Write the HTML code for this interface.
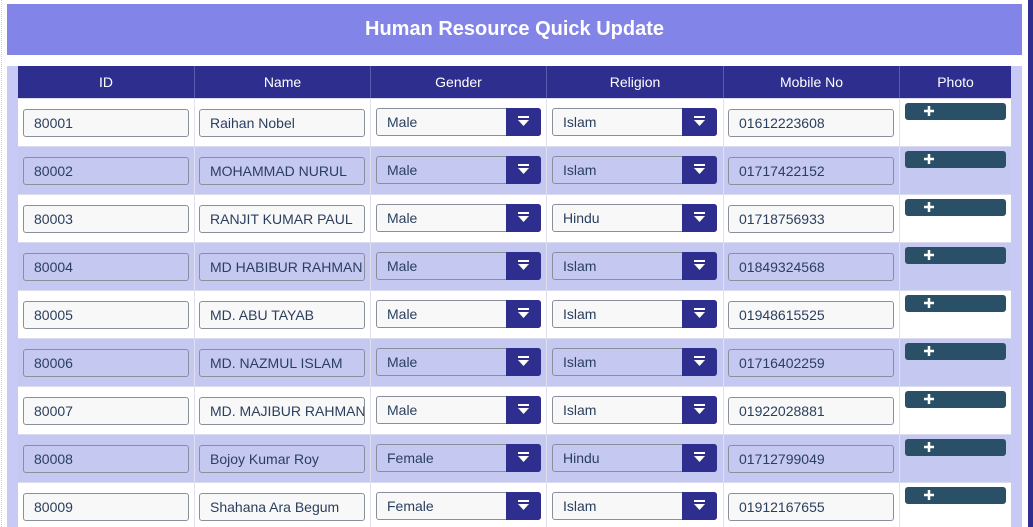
<!DOCTYPE html>
<html><head><meta charset="utf-8"><style>
*{box-sizing:border-box;margin:0;padding:0}
html,body{width:1033px;height:527px;overflow:hidden}
body{background:#fff;font-family:"Liberation Sans",sans-serif;position:relative}
.rbar{position:absolute;left:1028px;top:0;width:5px;height:527px;background:#2e2e8f}
.lline{position:absolute;left:1px;top:0;width:1px;height:527px;border-left:1px dotted #ccc}
.title{position:absolute;left:7px;top:4px;width:1015px;height:51px;background:#8284e8;color:#fff;font-weight:bold;font-size:20px;text-align:center;line-height:51px}
.wrap{position:absolute;left:7px;top:66px;width:1015px;height:470px;background:#c8c9f4}
.hdr{position:absolute;left:11px;top:0;width:993px;height:32px;background:#2e2e8f}
.hdr div{position:absolute;top:0;height:32px;line-height:32px;color:#fff;font-size:14px;text-align:center;border-left:1px solid #5a5ab0}
.row{position:absolute;left:11px;width:993px;height:48px;background:#fff;border-top:1px solid #dcdcf0}
.row.alt{background:#c5c8f0}
.cell{position:absolute;top:0;height:48px;border-left:1px solid #e0e0ee}
.inp{position:absolute;top:10px;height:28px;border:1px solid #8a8f9c;border-radius:3px;background:#f8f8f8;color:#2a3f5f;font-size:14px;line-height:26px;padding-left:10px;padding-right:10px;white-space:nowrap;overflow:hidden}
.alt .inp{background:#c5c8f0}
.sel{position:absolute;top:9px;height:28px;border:1px solid #8a8f9c;border-radius:3px;background:#f8f8f8;color:#2a3f5f;font-size:14px;line-height:26px;padding-left:10px}
.alt .sel{background:#c5c8f0}
.sel .b{position:absolute;right:-1px;top:-1px;width:35px;height:28px;background:#2e2e8f;border-radius:0 3px 3px 0}
.sel .b svg{position:absolute;left:11px;top:8px}
.ph{position:absolute;left:887px;top:4px;width:101px;height:17px;background:#2a5068;border-radius:3px}
.ph svg{position:absolute;left:18px;top:2px}
</style></head><body>
<div class="lline"></div>
<div class="title">Human Resource Quick Update</div>
<div class="wrap">
<div class="hdr">
<div style="left:0;width:176px;border-left:none">ID</div>
<div style="left:176px;width:176px">Name</div>
<div style="left:352px;width:176px">Gender</div>
<div style="left:528px;width:177px">Religion</div>
<div style="left:705px;width:176px">Mobile No</div>
<div style="left:881px;width:112px">Photo</div>
</div>
</div>
<div class="rbar"></div>

<div class="row" style="top:98px;left:18px">
<div class="inp" style="left:5px;width:166px">80001</div>
<div class="cell" style="left:176px"></div><div class="inp" style="left:181px;width:166px">Raihan Nobel</div>
<div class="cell" style="left:352px"></div><div class="sel" style="left:358px;width:165px">Male<span class="b"><svg width="13" height="12" viewBox="0 0 13 12"><path d="M1 1h11" stroke="#fff" stroke-width="2"/><path d="M1 4h11l-5.5 6z" fill="#fff"/></svg></span></div>
<div class="cell" style="left:528px"></div><div class="sel" style="left:534px;width:165px">Islam<span class="b"><svg width="13" height="12" viewBox="0 0 13 12"><path d="M1 1h11" stroke="#fff" stroke-width="2"/><path d="M1 4h11l-5.5 6z" fill="#fff"/></svg></span></div>
<div class="cell" style="left:705px"></div><div class="inp" style="left:710px;width:166px">01612223608</div>
<div class="cell" style="left:881px"></div><div class="ph"><svg width="12" height="12"><path d="M6 1v10M1 6h10" stroke="#fff" stroke-width="2.5"/></svg></div>
</div>

<div class="row alt" style="top:146px;left:18px">
<div class="inp" style="left:5px;width:166px">80002</div>
<div class="cell" style="left:176px"></div><div class="inp" style="left:181px;width:166px">MOHAMMAD NURUL</div>
<div class="cell" style="left:352px"></div><div class="sel" style="left:358px;width:165px">Male<span class="b"><svg width="13" height="12" viewBox="0 0 13 12"><path d="M1 1h11" stroke="#fff" stroke-width="2"/><path d="M1 4h11l-5.5 6z" fill="#fff"/></svg></span></div>
<div class="cell" style="left:528px"></div><div class="sel" style="left:534px;width:165px">Islam<span class="b"><svg width="13" height="12" viewBox="0 0 13 12"><path d="M1 1h11" stroke="#fff" stroke-width="2"/><path d="M1 4h11l-5.5 6z" fill="#fff"/></svg></span></div>
<div class="cell" style="left:705px"></div><div class="inp" style="left:710px;width:166px">01717422152</div>
<div class="cell" style="left:881px"></div><div class="ph"><svg width="12" height="12"><path d="M6 1v10M1 6h10" stroke="#fff" stroke-width="2.5"/></svg></div>
</div>

<div class="row" style="top:194px;left:18px">
<div class="inp" style="left:5px;width:166px">80003</div>
<div class="cell" style="left:176px"></div><div class="inp" style="left:181px;width:166px">RANJIT KUMAR PAUL</div>
<div class="cell" style="left:352px"></div><div class="sel" style="left:358px;width:165px">Male<span class="b"><svg width="13" height="12" viewBox="0 0 13 12"><path d="M1 1h11" stroke="#fff" stroke-width="2"/><path d="M1 4h11l-5.5 6z" fill="#fff"/></svg></span></div>
<div class="cell" style="left:528px"></div><div class="sel" style="left:534px;width:165px">Hindu<span class="b"><svg width="13" height="12" viewBox="0 0 13 12"><path d="M1 1h11" stroke="#fff" stroke-width="2"/><path d="M1 4h11l-5.5 6z" fill="#fff"/></svg></span></div>
<div class="cell" style="left:705px"></div><div class="inp" style="left:710px;width:166px">01718756933</div>
<div class="cell" style="left:881px"></div><div class="ph"><svg width="12" height="12"><path d="M6 1v10M1 6h10" stroke="#fff" stroke-width="2.5"/></svg></div>
</div>

<div class="row alt" style="top:242px;left:18px">
<div class="inp" style="left:5px;width:166px">80004</div>
<div class="cell" style="left:176px"></div><div class="inp" style="left:181px;width:166px">MD HABIBUR RAHMAN</div>
<div class="cell" style="left:352px"></div><div class="sel" style="left:358px;width:165px">Male<span class="b"><svg width="13" height="12" viewBox="0 0 13 12"><path d="M1 1h11" stroke="#fff" stroke-width="2"/><path d="M1 4h11l-5.5 6z" fill="#fff"/></svg></span></div>
<div class="cell" style="left:528px"></div><div class="sel" style="left:534px;width:165px">Islam<span class="b"><svg width="13" height="12" viewBox="0 0 13 12"><path d="M1 1h11" stroke="#fff" stroke-width="2"/><path d="M1 4h11l-5.5 6z" fill="#fff"/></svg></span></div>
<div class="cell" style="left:705px"></div><div class="inp" style="left:710px;width:166px">01849324568</div>
<div class="cell" style="left:881px"></div><div class="ph"><svg width="12" height="12"><path d="M6 1v10M1 6h10" stroke="#fff" stroke-width="2.5"/></svg></div>
</div>

<div class="row" style="top:290px;left:18px">
<div class="inp" style="left:5px;width:166px">80005</div>
<div class="cell" style="left:176px"></div><div class="inp" style="left:181px;width:166px">MD. ABU TAYAB</div>
<div class="cell" style="left:352px"></div><div class="sel" style="left:358px;width:165px">Male<span class="b"><svg width="13" height="12" viewBox="0 0 13 12"><path d="M1 1h11" stroke="#fff" stroke-width="2"/><path d="M1 4h11l-5.5 6z" fill="#fff"/></svg></span></div>
<div class="cell" style="left:528px"></div><div class="sel" style="left:534px;width:165px">Islam<span class="b"><svg width="13" height="12" viewBox="0 0 13 12"><path d="M1 1h11" stroke="#fff" stroke-width="2"/><path d="M1 4h11l-5.5 6z" fill="#fff"/></svg></span></div>
<div class="cell" style="left:705px"></div><div class="inp" style="left:710px;width:166px">01948615525</div>
<div class="cell" style="left:881px"></div><div class="ph"><svg width="12" height="12"><path d="M6 1v10M1 6h10" stroke="#fff" stroke-width="2.5"/></svg></div>
</div>

<div class="row alt" style="top:338px;left:18px">
<div class="inp" style="left:5px;width:166px">80006</div>
<div class="cell" style="left:176px"></div><div class="inp" style="left:181px;width:166px">MD. NAZMUL ISLAM</div>
<div class="cell" style="left:352px"></div><div class="sel" style="left:358px;width:165px">Male<span class="b"><svg width="13" height="12" viewBox="0 0 13 12"><path d="M1 1h11" stroke="#fff" stroke-width="2"/><path d="M1 4h11l-5.5 6z" fill="#fff"/></svg></span></div>
<div class="cell" style="left:528px"></div><div class="sel" style="left:534px;width:165px">Islam<span class="b"><svg width="13" height="12" viewBox="0 0 13 12"><path d="M1 1h11" stroke="#fff" stroke-width="2"/><path d="M1 4h11l-5.5 6z" fill="#fff"/></svg></span></div>
<div class="cell" style="left:705px"></div><div class="inp" style="left:710px;width:166px">01716402259</div>
<div class="cell" style="left:881px"></div><div class="ph"><svg width="12" height="12"><path d="M6 1v10M1 6h10" stroke="#fff" stroke-width="2.5"/></svg></div>
</div>

<div class="row" style="top:386px;left:18px">
<div class="inp" style="left:5px;width:166px">80007</div>
<div class="cell" style="left:176px"></div><div class="inp" style="left:181px;width:166px">MD. MAJIBUR RAHMAN</div>
<div class="cell" style="left:352px"></div><div class="sel" style="left:358px;width:165px">Male<span class="b"><svg width="13" height="12" viewBox="0 0 13 12"><path d="M1 1h11" stroke="#fff" stroke-width="2"/><path d="M1 4h11l-5.5 6z" fill="#fff"/></svg></span></div>
<div class="cell" style="left:528px"></div><div class="sel" style="left:534px;width:165px">Islam<span class="b"><svg width="13" height="12" viewBox="0 0 13 12"><path d="M1 1h11" stroke="#fff" stroke-width="2"/><path d="M1 4h11l-5.5 6z" fill="#fff"/></svg></span></div>
<div class="cell" style="left:705px"></div><div class="inp" style="left:710px;width:166px">01922028881</div>
<div class="cell" style="left:881px"></div><div class="ph"><svg width="12" height="12"><path d="M6 1v10M1 6h10" stroke="#fff" stroke-width="2.5"/></svg></div>
</div>

<div class="row alt" style="top:434px;left:18px">
<div class="inp" style="left:5px;width:166px">80008</div>
<div class="cell" style="left:176px"></div><div class="inp" style="left:181px;width:166px">Bojoy Kumar Roy</div>
<div class="cell" style="left:352px"></div><div class="sel" style="left:358px;width:165px">Female<span class="b"><svg width="13" height="12" viewBox="0 0 13 12"><path d="M1 1h11" stroke="#fff" stroke-width="2"/><path d="M1 4h11l-5.5 6z" fill="#fff"/></svg></span></div>
<div class="cell" style="left:528px"></div><div class="sel" style="left:534px;width:165px">Hindu<span class="b"><svg width="13" height="12" viewBox="0 0 13 12"><path d="M1 1h11" stroke="#fff" stroke-width="2"/><path d="M1 4h11l-5.5 6z" fill="#fff"/></svg></span></div>
<div class="cell" style="left:705px"></div><div class="inp" style="left:710px;width:166px">01712799049</div>
<div class="cell" style="left:881px"></div><div class="ph"><svg width="12" height="12"><path d="M6 1v10M1 6h10" stroke="#fff" stroke-width="2.5"/></svg></div>
</div>

<div class="row" style="top:482px;left:18px">
<div class="inp" style="left:5px;width:166px">80009</div>
<div class="cell" style="left:176px"></div><div class="inp" style="left:181px;width:166px">Shahana Ara Begum</div>
<div class="cell" style="left:352px"></div><div class="sel" style="left:358px;width:165px">Female<span class="b"><svg width="13" height="12" viewBox="0 0 13 12"><path d="M1 1h11" stroke="#fff" stroke-width="2"/><path d="M1 4h11l-5.5 6z" fill="#fff"/></svg></span></div>
<div class="cell" style="left:528px"></div><div class="sel" style="left:534px;width:165px">Islam<span class="b"><svg width="13" height="12" viewBox="0 0 13 12"><path d="M1 1h11" stroke="#fff" stroke-width="2"/><path d="M1 4h11l-5.5 6z" fill="#fff"/></svg></span></div>
<div class="cell" style="left:705px"></div><div class="inp" style="left:710px;width:166px">01912167655</div>
<div class="cell" style="left:881px"></div><div class="ph"><svg width="12" height="12"><path d="M6 1v10M1 6h10" stroke="#fff" stroke-width="2.5"/></svg></div>
</div>
</body></html>
